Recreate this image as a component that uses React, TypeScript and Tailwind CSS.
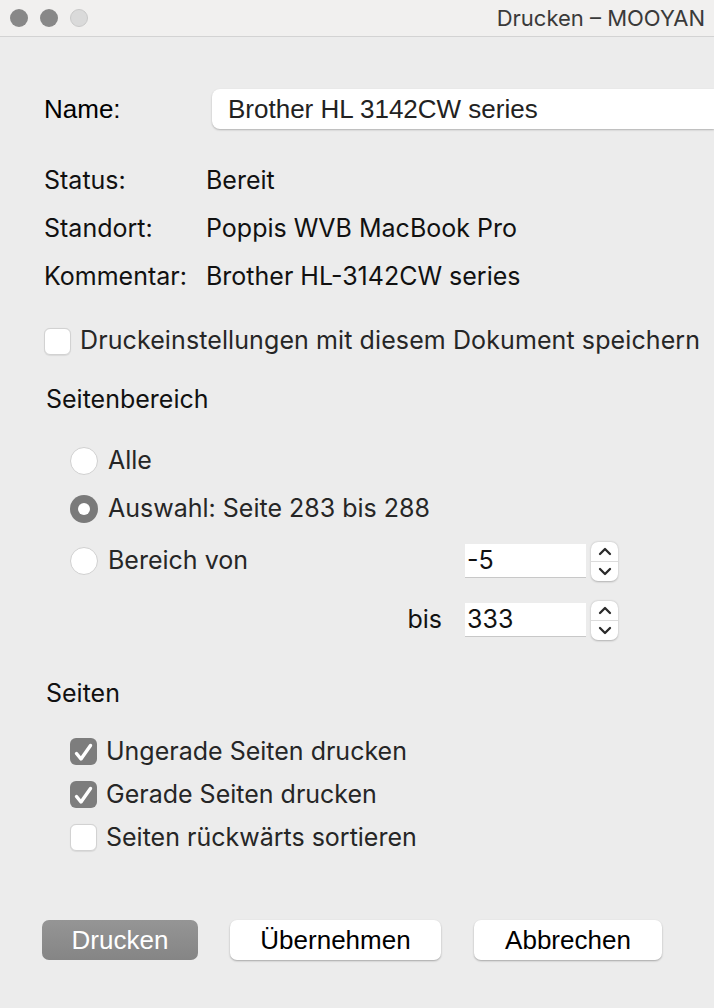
import React from "react"

// ─── Small macOS-style controls ────────────────────────────
function Checkbox({ checked }: { checked?: boolean }) {
  if (checked) {
    return (
      <span className="flex size-[27px] shrink-0 items-center justify-center rounded-[6px] bg-[#7d7d7d]">
        <svg width="27" height="27" viewBox="0 0 27 27" fill="none" aria-hidden="true">
          <path d="M6.5 15.5L11 21L20.5 7.5" stroke="white" strokeWidth="3.4" strokeLinecap="round" strokeLinejoin="round" />
        </svg>
      </span>
    )
  }
  return <span className="size-[27px] shrink-0 rounded-[6px] border border-[#d2d2d2] bg-white shadow-[0_0.5px_1px_rgba(0,0,0,0.08)]" />
}

function Radio({ checked }: { checked?: boolean }) {
  if (checked) {
    return (
      <span className="flex size-[28px] shrink-0 items-center justify-center rounded-full bg-[#7a7a7a]">
        <span className="size-[12px] rounded-full bg-white" />
      </span>
    )
  }
  return <span className="size-[28px] shrink-0 rounded-full border border-[#d0d0d0] bg-white" />
}

function Stepper() {
  return (
    <div className="ml-[5px] flex h-[39px] w-[27px] flex-col rounded-[7px] bg-white shadow-[0_0.5px_2px_rgba(0,0,0,0.25)]">
      <div className="flex flex-1 items-center justify-center border-b border-[#dcdcdc]">
        <svg width="14" height="9" viewBox="0 0 14 9" fill="none" aria-hidden="true">
          <path d="M2 7L7 2L12 7" stroke="#2a2a2a" strokeWidth="2.3" strokeLinecap="round" strokeLinejoin="round" />
        </svg>
      </div>
      <div className="flex flex-1 items-center justify-center">
        <svg width="14" height="9" viewBox="0 0 14 9" fill="none" aria-hidden="true">
          <path d="M2 2L7 7L12 2" stroke="#2a2a2a" strokeWidth="2.3" strokeLinecap="round" strokeLinejoin="round" />
        </svg>
      </div>
    </div>
  )
}

function NumberField({ value }: { value: string }) {
  return (
    <div className="flex items-center">
      <div className="flex h-[34px] w-[121px] items-center border-b border-[#c8c8c8] bg-white pl-[2px] text-[25px] text-[#111]">
        {value}
      </div>
      <Stepper />
    </div>
  )
}

const infoRows = [
  { label: "Status:", value: "Bereit" },
  { label: "Standort:", value: "Poppis WVB MacBook Pro" },
  { label: "Kommentar:", value: "Brother HL-3142CW series" },
]

const helvetica = { fontFamily: "'Liberation Sans', Arial, sans-serif" }

export default function App() {
  return (
    <div
      className="h-[1008px] w-[714px] overflow-hidden bg-[#ececec] text-[#1c1c1c]"
      style={{ fontFamily: "Inter, 'Noto Sans', sans-serif" }}
    >
      {/* Title bar */}
      <div className="flex h-[37px] items-center border-b border-[#d3d3d3] bg-[#f1f0ef] pl-[10px]">
        <div className="flex gap-[12px]">
          <span className="size-[18px] rounded-full bg-[#888888]" />
          <span className="size-[18px] rounded-full bg-[#888888]" />
          <span className="size-[18px] rounded-full border border-[#c9c9c9] bg-[#dadada]" />
        </div>
        <span className="ml-auto mr-[9px] whitespace-nowrap text-[22px] text-[#3a3a3a]">Drucken – MOOYAN</span>
      </div>

      <div className="pl-[44px]">
        {/* Name */}
        <div className="mt-[52px] flex h-[40px] items-center">
          <span className="w-[168px] text-[26px] text-black" style={helvetica}>
            Name:
          </span>
          <div
            className="flex h-[40px] flex-1 items-center rounded-l-[8px] bg-white pl-[16px] text-[26px] text-[#222] shadow-[0_1px_2px_rgba(0,0,0,0.25)]"
            style={helvetica}
          >
            Brother HL 3142CW series
          </div>
        </div>

        {/* Printer info */}
        <div className="mt-[28px] flex flex-col text-[25px] text-[#111]">
          {infoRows.map((row) => (
            <div key={row.label} className="flex h-[48px] items-center">
              <span className="w-[162px]">{row.label}</span>
              <span>{row.value}</span>
            </div>
          ))}
        </div>

        {/* Save settings */}
        <div className="mt-[20px] flex h-[40px] items-center gap-[9px] text-[25px] tracking-[0.1px] text-[#262626]">
          <Checkbox />
          <span className="whitespace-nowrap">Druckeinstellungen mit diesem Dokument speichern</span>
        </div>

        {/* Seitenbereich */}
        <div className="mt-[19px] ml-[2px] flex h-[40px] items-center text-[25px] text-[#111]">Seitenbereich</div>

        <div className="mt-[17px] flex flex-col pl-[26px] text-[25px] text-[#262626]">
          <div className="flex h-[48px] items-center gap-[10px]">
            <Radio />
            <span>Alle</span>
          </div>
          <div className="flex h-[48px] items-center gap-[10px]">
            <Radio checked />
            <span>Auswahl: Seite 283 bis 288</span>
          </div>
          <div className="mt-[4px] flex h-[48px] items-center">
            <div className="flex w-[395px] items-center gap-[10px]">
              <Radio />
              <span>Bereich von</span>
            </div>
            <NumberField value="-5" />
          </div>
          <div className="mt-[11px] flex h-[48px] items-center">
            <span className="w-[395px] pr-[23px] text-right text-[#111]">bis</span>
            <NumberField value="333" />
          </div>
        </div>

        {/* Seiten */}
        <div className="mt-[30px] ml-[2px] flex h-[40px] items-center text-[25px] text-[#111]">Seiten</div>

        <div className="mt-[16px] flex flex-col pl-[26px] text-[25px] text-[#262626]">
          <div className="flex h-[43px] items-center gap-[9px]">
            <Checkbox checked />
            <span>Ungerade Seiten drucken</span>
          </div>
          <div className="flex h-[43px] items-center gap-[9px]">
            <Checkbox checked />
            <span>Gerade Seiten drucken</span>
          </div>
          <div className="flex h-[43px] items-center gap-[9px]">
            <Checkbox />
            <span>Seiten rückwärts sortieren</span>
          </div>
        </div>
      </div>

      {/* Buttons */}
      <div className="mt-[61px] flex pl-[42px] text-[26px]" style={helvetica}>
        <button className="h-[40px] w-[156px] rounded-[7px] bg-gradient-to-b from-[#959595] to-[#858585] text-white">
          Drucken
        </button>
        <button className="ml-[32px] h-[40px] w-[211px] rounded-[7px] bg-white text-black shadow-[0_1px_2px_rgba(0,0,0,0.3)]">
          Übernehmen
        </button>
        <button className="ml-[33px] h-[40px] w-[188px] rounded-[7px] bg-white text-black shadow-[0_1px_2px_rgba(0,0,0,0.3)]">
          Abbrechen
        </button>
      </div>
    </div>
  )
}
